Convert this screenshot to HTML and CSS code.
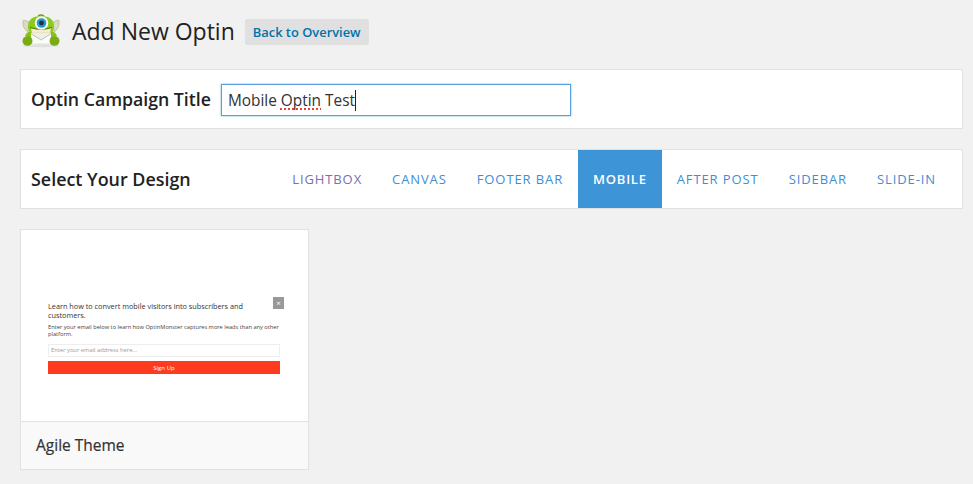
FILE: index.html
```html
<!DOCTYPE html>
<html lang="en">
<head>
<meta charset="utf-8">
<title>Add New Optin</title>
<link rel="stylesheet" href="styles.css">
</head>
<body>
<header class="page-head">
  <svg class="logo" width="42" height="34" viewBox="0 0 42 34" aria-hidden="true">
    <ellipse cx="20" cy="32" rx="19" ry="1.200" fill="#e0e0e0"/>
    <path d="M8 8 Q2 5 2 7 Q1 14 7 18Z" fill="#d8dcc0" stroke="#a9b07e" stroke-width=".6"/>
    <path d="M32 8 Q38 5 38 7 Q39 14 33 18Z" fill="#d8dcc0" stroke="#a9b07e" stroke-width=".6"/>
    <path d="M17 2 Q20 0 23 2" stroke="#6f9a10" stroke-width="1.500" fill="none"/>
    <path d="M7 13 Q7 2 20 2 Q33 2 33 13 Q33 22 20 22 Q7 22 7 13Z" fill="#8ccb1c"/>
    <path d="M10 14 Q20 17 30 14 L29 20 H11Z" fill="#f3edc8"/>
    <path d="M9 13.500 Q20 17 31 13.500" stroke="#4f740b" stroke-width="1" fill="none"/>
    <circle cx="20.500" cy="9" r="6.800" fill="#f4fbff"/>
    <circle cx="20.500" cy="9" r="4.800" fill="#2e97c9"/>
    <circle cx="20.500" cy="9" r="2.400" fill="#15364a"/>
    <path d="M9 19 H31 V30 H9Z" fill="#fbfbf7" stroke="#cfd2c4" stroke-width=".6"/>
    <path d="M9 19 L20 26 L31 19" fill="#eef0e6" stroke="#a8ab9c" stroke-width=".7"/>
    <path d="M4 22 Q6 17 10 18 L10 24 Z" fill="#86c218"/>
    <path d="M36 22 Q34 17 30 18 L30 24 Z" fill="#86c218"/>
    <ellipse cx="6.500" cy="27" rx="5" ry="4.800" fill="#78ab14"/>
    <ellipse cx="33.500" cy="27" rx="5" ry="4.800" fill="#78ab14"/>
  </svg>
  <h1 class="page-title">Add New Optin</h1>
  <a class="back-btn" href="#">Back to Overview</a>
</header>

<section class="panel title-panel">
  <label class="panel-label" for="campaign">Optin Campaign Title</label>
  <div class="fake-input" id="campaign"><span>Mobile <span class="misspelt">Optin</span> Test</span><i class="caret"></i></div>
</section>

<section class="panel design-panel">
  <h2 class="panel-label design-label">Select Your Design</h2>
  <nav class="tabs">
    <a class="tab tab-first" href="#">LIGHTBOX</a>
    <a class="tab" href="#">CANVAS</a>
    <a class="tab" href="#">FOOTER BAR</a>
    <a class="tab active" href="#">MOBILE</a>
    <a class="tab" href="#">AFTER POST</a>
    <a class="tab" href="#">SIDEBAR</a>
    <a class="tab" href="#">SLIDE-IN</a>
  </nav>
</section>

<article class="card">
  <div class="preview">
    <div class="preview-close">×</div>
    <p class="preview-heading">Learn how to convert mobile visitors into subscribers and customers.</p>
    <p class="preview-text">Enter your email below to learn how OptinMonster captures more leads than any other platform.</p>
    <div class="preview-input">Enter your email address here...</div>
    <div class="preview-btn">Sign Up</div>
  </div>
  <div class="card-foot">Agile Theme</div>
</article>
</body>
</html>
```

FILE: styles.css
```css
* { box-sizing: border-box; }
html, body { height: 100%; }
body {
  margin: 0;
  padding: 14px 10px 0 20px;
  background: #f1f1f1;
  color: #222;
  font-family: "Open Sans", sans-serif;
  overflow: hidden;
}
.page-head {
  display: flex;
  align-items: center;
  height: 34px;
  margin-bottom: 21px;
}
.logo { margin-left: 1px; flex: none; }
.page-title {
  margin: 0 0 0 9px;
  font-size: 23px;
  font-weight: 400;
  color: #222;
  line-height: 34px;
}
.back-btn {
  margin: 2px 0 0 10px;
  padding: 0 8px;
  height: 26px;
  line-height: 27px;
  background: #e0e0e0;
  border-radius: 2px;
  color: #0073aa;
  font-size: 12.900px;
  font-weight: 600;
  text-decoration: none;
}
.panel {
  display: flex;
  align-items: center;
  height: 60px;
  background: #fff;
  border: 1px solid #e1e1e1;
  margin-bottom: 20px;
  padding: 0 11px 0 10px;
}
.panel-label {
  margin: 0;
  font-size: 17.700px;
  font-weight: 600;
  color: #222;
}
.design-label { font-size: 17.900px; }
.fake-input {
  display: flex;
  align-items: center;
  width: 350px;
  height: 32px;
  margin: 2px 0 0 10px;
  padding-left: 6px;
  border: 1px solid #5b9dd9;
  box-shadow: 0 0 2px rgba(30, 140, 190, .6);
  font-size: 15.400px;
  color: #333;
  background: #fff;
}
.misspelt {
  text-decoration: underline dotted #e8432e 2px;
  text-decoration-skip-ink: none;
  text-underline-offset: 3px;
}
.caret {
  width: 1px;
  height: 21px;
  background: #222;
}
.design-panel { justify-content: space-between; }
.tabs { display: flex; align-self: stretch; }
.tab {
  display: flex;
  align-items: center;
  padding: 0 15px;
  font-size: 13px;
  font-weight: 400;
  letter-spacing: .9px;
  color: #3f8ed3;
  text-decoration: none;
}
.tab-first { color: #7a6fae; }
.tab.active {
  background: #3d94d6;
  color: #fff;
  font-weight: 600;
  letter-spacing: .75px;
}
.card {
  width: 289px;
  height: 241px;
  background: #fff;
  border: 1px solid #e1e1e1;
}
.preview {
  position: relative;
  height: 192px;
  padding: 71.500px 28px 0 27px;
  border-bottom: 1px solid #e1e1e1;
}
.preview-close {
  position: absolute;
  top: 67px;
  right: 24px;
  width: 11px;
  height: 12px;
  background: #999;
  color: #fff;
  font-size: 8px;
  line-height: 12px;
  text-align: center;
}
.preview-heading {
  margin: 0 0 3.500px;
  font-size: 7.300px;
  line-height: 9.500px;
  color: #333;
}
.preview-text {
  margin: 0 0 5.500px;
  font-size: 5.700px;
  line-height: 7px;
  color: #444;
}
.preview-input {
  height: 13px;
  padding-left: 2px;
  border: 1px solid #eee;
  font-size: 5.800px;
  line-height: 11px;
  color: #999;
}
.preview-btn {
  height: 13px;
  margin-top: 4px;
  background: #ff3b1f;
  color: #fff;
  font-size: 6.100px;
  line-height: 13px;
  text-align: center;
}
.card-foot {
  height: 47px;
  padding-left: 15px;
  background: #f9f9f9;
  font-size: 15.500px;
  font-weight: 400;
  -webkit-text-stroke: .2px #333;
  line-height: 46px;
  color: #333;
}
```
